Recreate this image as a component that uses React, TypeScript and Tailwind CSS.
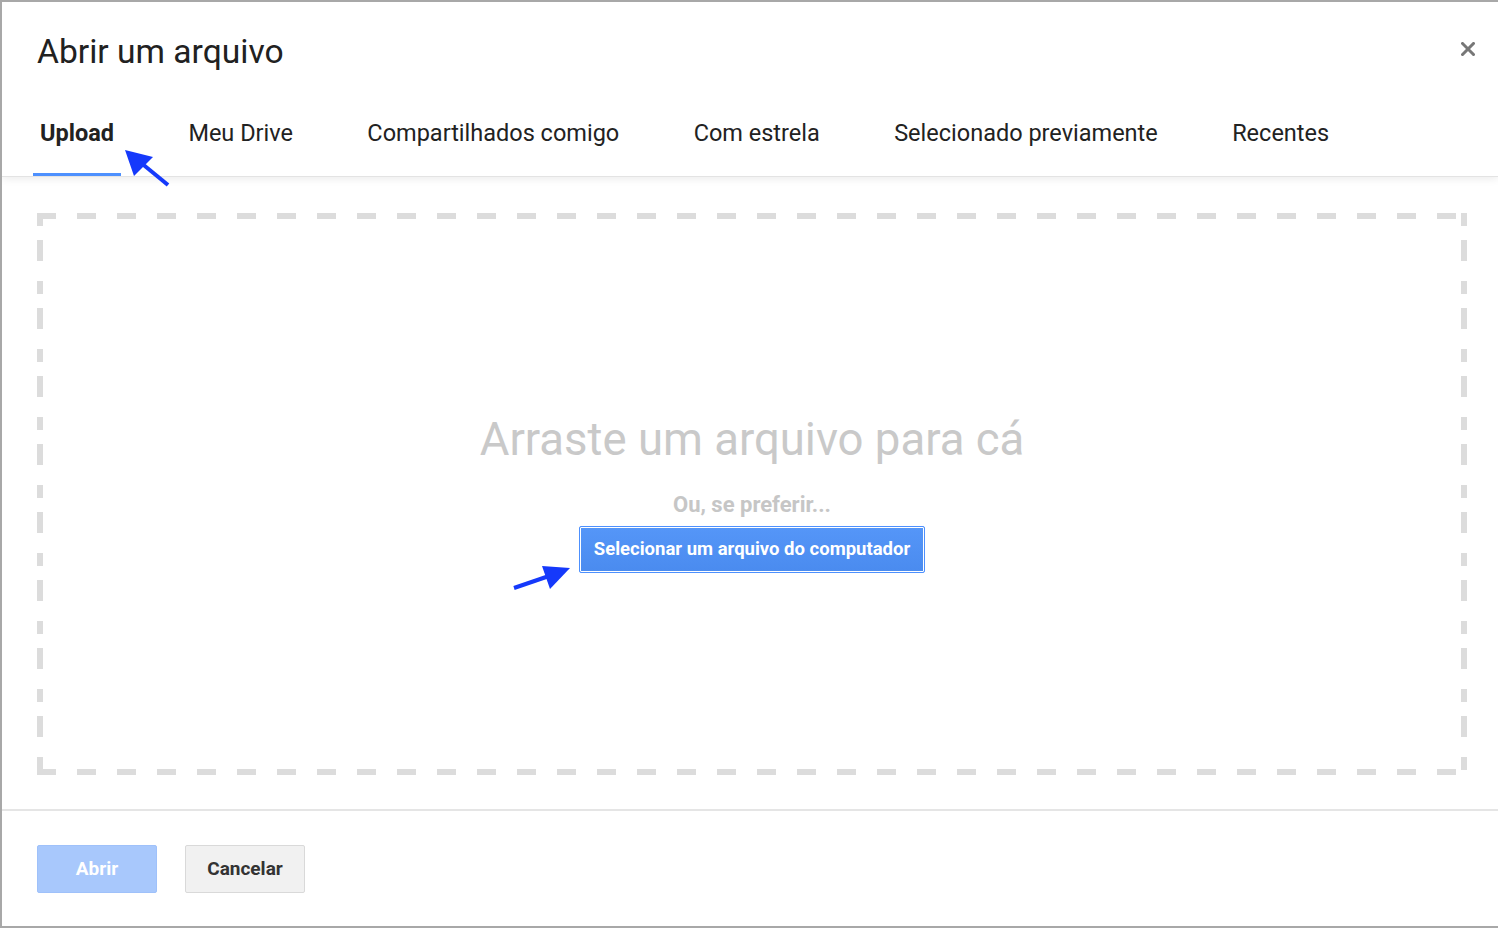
import React from "react";

const tabs = [
  "Upload",
  "Meu Drive",
  "Compartilhados comigo",
  "Com estrela",
  "Selecionado previamente",
  "Recentes",
];

export default function App() {
  return (
    <div
      className="relative w-[1498px] h-[928px] bg-white border-l-2 border-t-2 border-b-2 border-[#a8a8a8] flex flex-col overflow-hidden"
      style={{ fontFamily: "Roboto, 'Noto Sans', Arial, sans-serif" }}
    >
      {/* Header */}
      <div className="relative z-10 shadow-[0_1px_0_#e3e3e3,0_3px_8px_rgba(0,0,0,0.08)] bg-white">
        <div className="pl-[35px] pt-[33px] text-[33.6px] leading-[33px] text-[#212121]">
          Abrir um arquivo
        </div>
        <button className="absolute right-[23px] top-[40px] w-[14px] h-[14px]">
          <svg width="14" height="14" viewBox="0 0 14 14">
            <path d="M1.5 1.5L12.5 12.5M12.5 1.5L1.5 12.5" stroke="#777" strokeWidth="3" strokeLinecap="square" />
          </svg>
        </button>
        <div className="mt-[32px] pl-[31px] flex gap-[60.4px]">
          {tabs.map((t, i) => (
            <div
              key={t}
              className={
                "h-[76px] pt-[22px] px-[7px] text-[23.5px] leading-[23px] border-b-[3px] whitespace-nowrap " +
                (i === 0
                  ? "font-bold text-[#222] border-[#4d90fe]"
                  : "text-[#222] border-transparent")
              }
            >
              {t}
            </div>
          ))}
        </div>
      </div>

      {/* Content */}
      <div className="h-[633px] pt-[37px] pl-[35px] pr-[31px]">
        <div className="relative h-[562px] flex flex-col items-center pt-[204px]">
          <svg
            className="absolute inset-0 pointer-events-none"
            width="1430"
            height="562"
            viewBox="0 0 1430 562"
          >
            <line x1="0" y1="3" x2="1430" y2="3" stroke="#dcdcdc" strokeWidth="6" strokeDasharray="19 21" />
            <line x1="0" y1="559" x2="1430" y2="559" stroke="#dcdcdc" strokeWidth="6" strokeDasharray="19 21" />
            <line x1="3" y1="0" x2="3" y2="562" stroke="#dcdcdc" strokeWidth="6" strokeDasharray="13 14 21 20" strokeDashoffset="0" />
            <line x1="1427" y1="0" x2="1427" y2="562" stroke="#dcdcdc" strokeWidth="6" strokeDasharray="13 14 21 20" strokeDashoffset="0" />
          </svg>
          <div className="text-[45.5px] leading-[45px] text-[#c9c9c9] font-normal whitespace-nowrap">
            Arraste um arquivo para cá
          </div>
          <div className="mt-[32px] text-[22px] leading-[22px] font-bold text-[#c6c6c6] whitespace-nowrap">
            Ou, se preferir...
          </div>
          <button className="mt-[10px] w-[346px] h-[47px] rounded-[2px] border border-[#4d90fe] bg-gradient-to-b from-[#5596f8] to-[#4a8bef] shadow-[inset_0_0_0_1px_#ffffff] text-white text-[18.5px] font-bold whitespace-nowrap">
            Selecionar um arquivo do computador
          </button>
        </div>
      </div>

      {/* Footer */}
      <div className="border-t-2 border-[#e5e5e5] pt-[34px] pl-[35px] flex gap-[28px]">
        <button className="w-[120px] h-[48px] rounded-[2px] border border-[#9fc1fa] bg-[#a8c8fc] text-white text-[19px] font-bold">
          Abrir
        </button>
        <button className="w-[120px] h-[48px] rounded-[2px] border border-[#d9d9d9] bg-[#f1f1f1] text-[#333] text-[19px] font-bold">
          Cancelar
        </button>
      </div>

      {/* Annotation arrows */}
      <svg
        className="absolute z-20 left-[-2px] top-[-2px] pointer-events-none"
        width="1498"
        height="928"
        viewBox="0 0 1498 928"
      >
        <line x1="168" y1="185" x2="140" y2="162" stroke="#1539fb" strokeWidth="4" />
        <polygon points="125,150 153,157 134,176" fill="#1539fb" />
        <line x1="514" y1="588" x2="552" y2="575" stroke="#1539fb" strokeWidth="4" />
        <polygon points="570,568 542,566 550,589" fill="#1539fb" />
      </svg>
    </div>
  );
}
